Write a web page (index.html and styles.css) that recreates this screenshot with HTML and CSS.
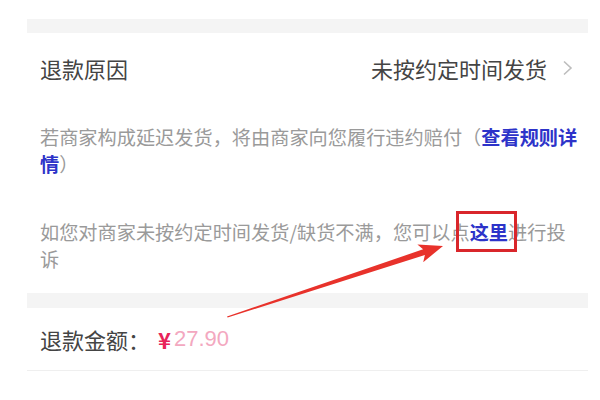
FILE: index.html
```html
<!DOCTYPE html>
<html lang="zh-CN">

<head>
    <meta charset="UTF-8">
    <title>退款详情</title>
    <link rel="stylesheet" href="styles.css">
</head>

<body>
    <div class="page">
        <div class="band top"></div>

        <div class="row reason">
            <span class="label">退款原因</span>
            <span class="value">未按约定时间发货
                <svg class="chevron" width="11" height="16" viewBox="0 0 11 16">
                    <polyline points="2,1.5 9,8 2,14.5" fill="none" stroke="#bdbdbd" stroke-width="1.6" />
                </svg>
            </span>
        </div>

        <p class="note first">若商家构成延迟发货，将由商家向您履行违约赔付（<a class="link">查看规则详情</a>）</p>
        <p class="note second">如您对商家未按约定时间发货/缺货不满，您可以点<a class="link here">这里</a>进行投诉</p>

        <div class="band mid"></div>

        <div class="row amount">
            <span class="label">退款金额：</span>
            <span class="yen">¥</span><span class="price">27.90</span>
        </div>
    </div>

    <!-- annotation arrow drawn over the screenshot -->
    <svg class="arrow" width="600" height="400" viewBox="0 0 600 400">
        <polygon fill="#e8322b"
            points="227,316.5 423.1,249.3 417.4,244.6 443,246 423.2,262.2 424.9,255.1 227.6,317.6" />
    </svg>
</body>

</html>
```

FILE: styles.css
```css
body {
    margin: 0;
    background-color: white;
    font-family: 'Noto Sans CJK SC', 'Noto Sans', sans-serif;
    color: #444;
}

.page {
    width: 561px;
    margin-left: 27px;
    padding-top: 19px;
}

.band {
    height: 14px;
    background-color: #f4f4f4;
}

.band.mid {
    height: 15px;
    margin-top: 20px;
}

.row {
    display: flex;
    align-items: center;
    padding: 0 15px 0 13px;
    font-size: 22px;
}

.reason {
    height: 70px;
    justify-content: space-between;
}

.value {
    display: flex;
    align-items: center;
}

.chevron {
    margin-left: 15px;
}

.note {
    margin: 0;
    padding-left: 13px;
    width: 538px;
    font-size: 19.2px;
    line-height: 27px;
    color: #9a9a9a;
}

.note.first {
    margin-top: 21px;
}

.note.second {
    margin-top: 41px;
}

.link {
    color: #2d33c9;
    font-weight: bold;
}

.here {
    position: relative;
}

.here::after {
    content: '';
    position: absolute;
    left: -14px;
    right: -9px;
    top: -7px;
    bottom: -6px;
    border: 3px solid #d9262b;
}

.amount {
    height: 62px;
    border-bottom: 1px solid #efefef;
}

.yen {
    color: #e8245a;
    font-size: 22px;
    font-weight: bold;
    margin-left: 8px;
}

.price {
    font-family: 'Liberation Sans', 'Noto Sans', sans-serif;
    color: #f3a8c0;
    font-size: 22px;
    margin-left: 3px;
}

.arrow {
    position: absolute;
    left: 0;
    top: 0;
    pointer-events: none;
}
```
